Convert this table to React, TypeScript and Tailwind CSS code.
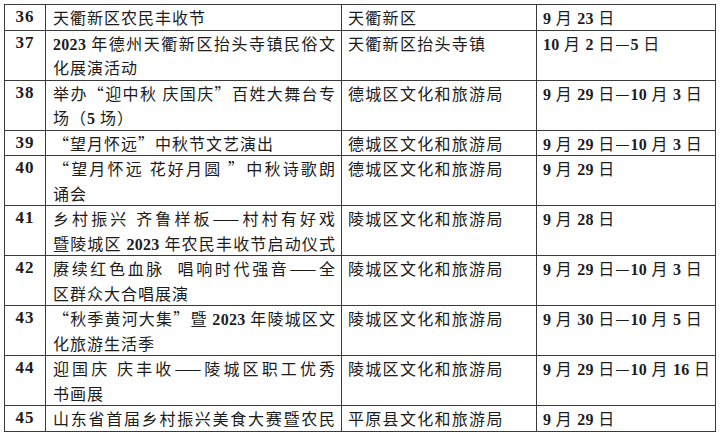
import React from 'react'

type Row = {
  no: string
  name: string[]
  fillLast?: boolean
  org: string
  date: string
}

const rows: Row[] = [
  { no: '36', name: ['天衢新区农民丰收节'], org: '天衢新区', date: '9 月 23 日' },
  { no: '37', name: ['2023 年德州天衢新区抬头寺镇民俗文', '化展演活动'], org: '天衢新区抬头寺镇', date: '10 月 2 日—5 日' },
  { no: '38', name: ['举办“迎中秋 庆国庆”百姓大舞台专', '场（5 场）'], org: '德城区文化和旅游局', date: '9 月 29 日—10 月 3 日' },
  { no: '39', name: ['“望月怀远”中秋节文艺演出'], org: '德城区文化和旅游局', date: '9 月 29 日—10 月 3 日' },
  { no: '40', name: ['“望月怀远 花好月圆 ”中秋诗歌朗', '诵会'], org: '德城区文化和旅游局', date: '9 月 29 日' },
  { no: '41', name: ['乡村振兴 齐鲁样板——村村有好戏', '暨陵城区 2023 年农民丰收节启动仪式'], fillLast: true, org: '陵城区文化和旅游局', date: '9 月 28 日' },
  { no: '42', name: ['赓续红色血脉  唱响时代强音——全', '区群众大合唱展演'], org: '陵城区文化和旅游局', date: '9 月 29 日—10 月 3 日' },
  { no: '43', name: ['“秋季黄河大集”暨 2023 年陵城区文', '化旅游生活季'], org: '陵城区文化和旅游局', date: '9 月 30 日—10 月 5 日' },
  { no: '44', name: ['迎国庆 庆丰收——陵城区职工优秀', '书画展'], org: '陵城区文化和旅游局', date: '9 月 29 日—10 月 16 日' },
  { no: '45', name: ['山东省首届乡村振兴美食大赛暨农民'], fillLast: true, org: '平原县文化和旅游局', date: '9 月 29 日' },
]

// digits come out in a bold serif, the rest in the CJK face
function Txt({ text }: { text: string }) {
  return (
    <>
      {text.split(/(\d+)/).map((part, i) =>
        /^\d+$/.test(part) ? (
          <span key={i} className="font-['Liberation_Serif',serif] font-bold tracking-[0.3px] leading-none">
            {part}
          </span>
        ) : (
          <span key={i} className="leading-none">{part}</span>
        )
      )}
    </>
  )
}

const line = 'h-[24.5px] leading-[24.5px] overflow-hidden whitespace-pre'

export default function App() {
  return (
    <div className="w-[720px] h-[438px] bg-white pt-[4px] pl-[4px] overflow-hidden">
      <table className="table-fixed border-collapse w-[711px] text-[16px] leading-[24.5px] tracking-[1px] text-[#1c1c1c] font-['Noto_Sans_CJK_SC',sans-serif]">
        <colgroup>
          <col className="w-[41px]" />
          <col className="w-[296px]" />
          <col className="w-[195px]" />
          <col className="w-[179px]" />
        </colgroup>
        <tbody>
          {rows.map((r) => (
            <tr key={r.no}>
              <td className="border border-[#3a3a3a] p-0 align-top text-center">
                <div className={`${line} font-['Liberation_Serif',serif] font-bold text-[17px]`}>{r.no}</div>
              </td>
              <td className="border border-[#3a3a3a] pl-[7px] pr-[5px] py-0 align-top">
                {r.name.map((text, i) => {
                  const full = i < r.name.length - 1 || r.fillLast
                  return (
                    <div key={i} className={full ? `${line} text-justify [text-align-last:justify]` : line}>
                      <Txt text={text} />
                    </div>
                  )
                })}
              </td>
              <td className="border border-[#3a3a3a] pl-[6px] pr-[4px] py-0 align-top tracking-[1.3px]">
                <div className={line}>
                  <Txt text={r.org} />
                </div>
              </td>
              <td className="border border-[#3a3a3a] pl-[6px] pr-[2px] py-0 align-top tracking-[0.9px]">
                <div className={line}>
                  <Txt text={r.date} />
                </div>
              </td>
            </tr>
          ))}
        </tbody>
      </table>
    </div>
  )
}
